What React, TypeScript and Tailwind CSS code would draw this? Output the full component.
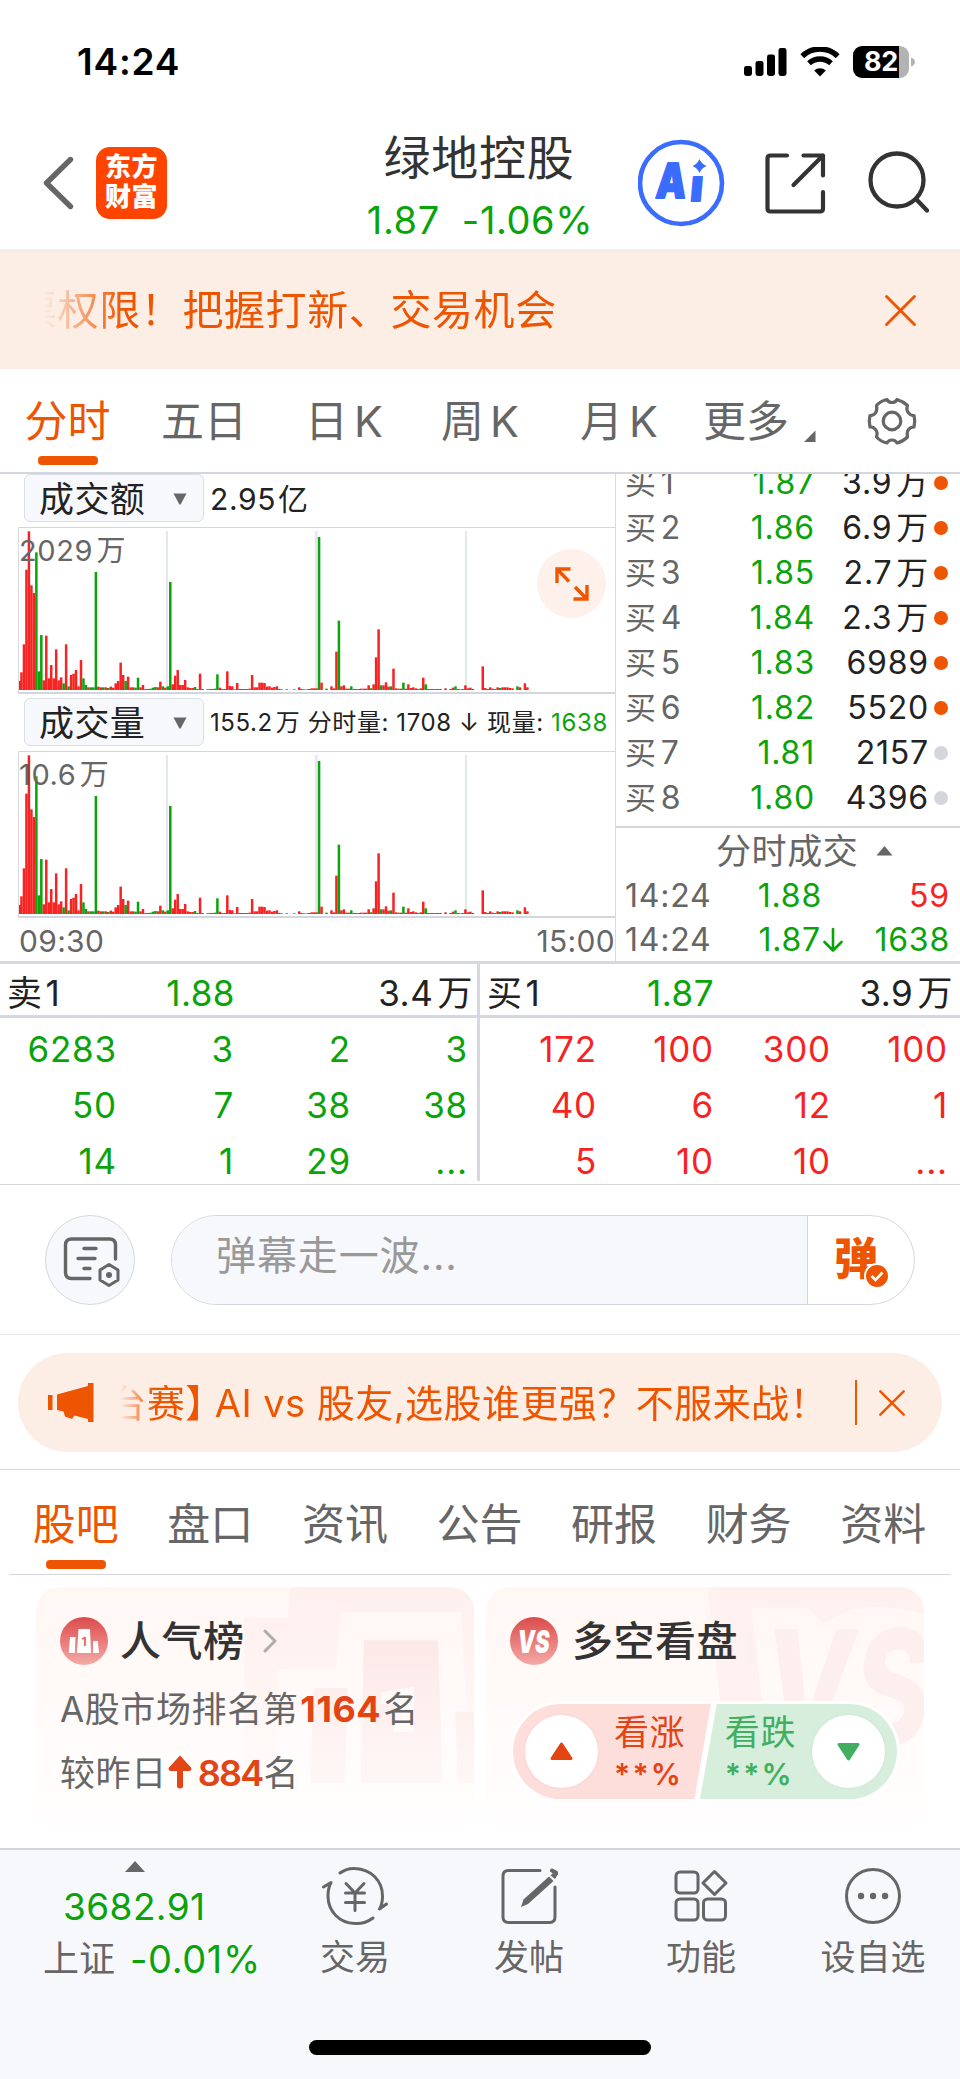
import React from "react";

const RED = "#f72323";
const GREEN = "#0aa30a";

/* One entry per traded minute: [minute, height, isGreen]. */
const BARS: Array<[number, number, number]> = [
  [0, 27, 0], [1, 53, 0], [2, 137, 0], [3, 361, 0], [4, 476, 0], [5, 314, 0], [6, 291, 0], [7, 413, 1],
  [8, 56, 1], [9, 165, 1], [10, 29, 0], [11, 163, 0], [12, 35, 0], [13, 75, 0], [14, 35, 0], [15, 122, 0],
  [16, 29, 0], [17, 38, 0], [18, 20, 1], [19, 137, 0], [20, 11, 1], [21, 45, 0], [22, 49, 0], [23, 60, 0],
  [24, 11, 0], [25, 90, 0], [26, 35, 1], [27, 15, 1], [28, 8, 0], [29, 8, 1], [30, 8, 1], [31, 354, 1],
  [32, 10, 0], [33, 8, 0], [34, 8, 1], [35, 8, 0], [36, 6, 1], [37, 10, 0], [38, 7, 0], [39, 20, 0],
  [40, 27, 0], [41, 82, 0], [42, 45, 0], [43, 27, 1], [44, 40, 0], [45, 8, 0], [46, 8, 0], [47, 7, 1],
  [48, 37, 1], [49, 8, 0], [50, 15, 0], [51, 3, 0], [52, 3, 1], [53, 4, 1], [54, 7, 1], [55, 9, 1],
  [56, 8, 0], [57, 25, 0], [58, 11, 1], [59, 7, 0], [60, 11, 1], [61, 324, 1], [62, 17, 0], [63, 43, 0],
  [64, 60, 0], [65, 15, 0], [66, 15, 0], [67, 30, 0], [68, 8, 0], [69, 6, 0], [70, 6, 0], [71, 9, 1],
  [72, 3, 0], [73, 49, 0], [74, 3, 0], [76, 2, 1], [77, 3, 0], [78, 3, 0], [79, 4, 1], [80, 47, 1],
  [81, 7, 0], [82, 3, 0], [83, 3, 0], [84, 56, 0], [85, 12, 0], [86, 11, 0], [87, 2, 0], [88, 21, 0],
  [89, 3, 0], [90, 3, 0], [91, 3, 0], [92, 3, 0], [93, 4, 0], [94, 45, 0], [95, 8, 0], [96, 8, 0],
  [97, 22, 0], [98, 22, 0], [99, 21, 0], [100, 10, 0], [101, 11, 0], [102, 7, 0], [103, 9, 0], [104, 11, 0],
  [105, 3, 0], [106, 2, 0], [108, 2, 1], [111, 2, 0], [113, 8, 0], [114, 3, 0], [115, 2, 0], [116, 2, 1],
  [117, 3, 0], [118, 5, 0], [119, 5, 0], [120, 5, 0], [121, 459, 1], [122, 22, 0], [124, 4, 1], [126, 11, 0],
  [127, 5, 0], [128, 115, 0], [129, 208, 1], [130, 11, 0], [131, 14, 0], [132, 4, 0], [133, 4, 0], [134, 11, 1],
  [135, 3, 0], [136, 3, 0], [137, 3, 0], [138, 4, 0], [139, 4, 0], [140, 4, 0], [141, 14, 0], [142, 5, 1],
  [143, 17, 0], [144, 98, 0], [145, 182, 0], [146, 14, 1], [147, 14, 0], [148, 23, 0], [149, 10, 0], [150, 11, 1],
  [151, 64, 0], [152, 5, 0], [153, 4, 0], [154, 4, 0], [155, 22, 1], [156, 4, 0], [157, 17, 0], [158, 6, 0],
  [159, 8, 0], [160, 5, 0], [161, 3, 0], [162, 5, 0], [163, 37, 0], [164, 17, 1], [165, 3, 0], [166, 3, 0],
  [167, 3, 0], [168, 3, 0], [169, 3, 0], [170, 3, 0], [172, 5, 0], [174, 3, 0], [175, 7, 0], [176, 11, 1],
  [177, 3, 0], [178, 2, 0], [179, 3, 0], [180, 14, 0], [181, 5, 0], [182, 7, 0], [183, 3, 0], [187, 71, 0],
  [188, 6, 0], [189, 3, 0], [190, 8, 0], [191, 4, 0], [192, 3, 0], [193, 8, 0], [194, 6, 1], [195, 8, 0],
  [196, 8, 0], [197, 8, 0], [198, 6, 0], [199, 5, 0], [201, 11, 1], [202, 8, 0], [204, 20, 0], [205, 8, 0],
];

function VolumeChart() {
  return (
    <svg width="597" height="163" viewBox="0 0 597 163" className="block" shapeRendering="geometricPrecision">
      <g fill="#e3e7ee">
        <rect x="148" y="3" width="2" height="159" />
        <rect x="297" y="3" width="2.6" height="159" />
        <rect x="447" y="3" width="2" height="159" />
      </g>
      {BARS.map(([m, h, g]) => {
        const x = Math.max(1, 1 + m * 2.48 - 1.25);
        return <rect key={m} x={x} y={162 - h / 3} width="2.5" height={h / 3} fill={g ? GREEN : RED} />;
      })}
    </svg>
  );
}

/* A number followed by its ten-thousands unit, set slightly apart. */
function Wan({ children }: { children: string }) {
  return (
    <>
      {children}
      <span className="ml-[0.12em]">万</span>
    </>
  );
}

function ChartPanel({ name, peak, children, height }: { name: string; peak: string; height: string; children: React.ReactNode }) {
  return (
    <div className="ml-[18px]">
      <div className={"flex items-start " + height}>
        <div className="ml-[6px] flex h-[48px] w-[180px] shrink-0 items-center rounded-[6px] border border-[#dcdee6] bg-[#f7f8fb] pl-[14px] pt-[2px] text-[35px] text-[#222]">
          <span className="tracking-[0.4px]">{name}</span>
          <svg width="14" height="12" viewBox="0 0 14 12" className="ml-[28px]">
            <path d="M0.5 0.5H13.5L7.6 11.5H6.4Z" fill="#666" />
          </svg>
        </div>
        <div className="ml-[6px] flex h-[48px] items-center whitespace-nowrap pt-[1px] text-[#222]">{children}</div>
      </div>
      <div className="relative h-[167px] border-b-2 border-l border-t border-b-[#d3d7dd] border-l-[#d8dae0] border-t-[#d3d7dd]">
        <div className="-ml-px">
          <VolumeChart />
        </div>
        <div className="absolute left-0 top-[5px] flex h-[34px] items-center text-[29px] tracking-[0.6px] text-[#666]">
          <Wan>{peak}</Wan>
        </div>
      </div>
    </div>
  );
}

const BIDS: Array<[string, string, string, boolean, boolean]> = [
  ["1", "1.87", "3.9", true, true],
  ["2", "1.86", "6.9", true, true],
  ["3", "1.85", "2.7", true, true],
  ["4", "1.84", "2.3", true, true],
  ["5", "1.83", "6989", false, true],
  ["6", "1.82", "5520", false, true],
  ["7", "1.81", "2157", false, false],
  ["8", "1.80", "4396", false, false],
];

const SELLS = [["6283", "3", "2", "3"], ["50", "7", "38", "38"], ["14", "1", "29", "..."]];
const BUYS = [["172", "100", "300", "100"], ["40", "6", "12", "1"], ["5", "10", "10", "..."]];

function QueueGrid({ rows, className }: { rows: string[][]; className: string }) {
  return (
    <div className={"flex flex-col pt-[3px] " + className}>
      {rows.map((r, i) => (
        <div key={i} className="flex h-[56px] shrink-0 items-center justify-end text-[35px] tracking-[0.8px]">
          {r.map((v, j) => (
            <span key={j} className="w-[117px] shrink-0 text-right">{v}</span>
          ))}
        </div>
      ))}
    </div>
  );
}

function Close({ size, className }: { size: number; className?: string }) {
  return (
    <svg width={size} height={size} viewBox="0 0 30 30" className={className}>
      <path d="M1.5 1.5L28.5 28.5M28.5 1.5L1.5 28.5" stroke="#ee5500" strokeWidth="2.8" strokeLinecap="round" />
    </svg>
  );
}

function StatusBar() {
  return (
    <div className="h-[117px] pt-[31px]">
      <div className="flex h-[61px] items-center">
        <span className="ml-[77px] w-[667px] text-[37px] font-semibold tracking-[0.8px] text-black">14:24</span>
        <svg width="43" height="30" viewBox="0 0 43 30" className="shrink-0">
          <rect x="0" y="19" width="8" height="10" rx="2.4" />
          <rect x="11.5" y="14" width="8" height="15" rx="2.4" />
          <rect x="23" y="7.5" width="8" height="21.5" rx="2.4" />
          <rect x="34.5" y="1" width="8" height="28" rx="2.4" />
        </svg>
        <svg width="40" height="30" viewBox="0 0 40 30" className="ml-[13px] shrink-0" fill="none" stroke="#000">
          <path d="M2.3 9.2A25.5 25.5 0 0 1 37.7 9.2" strokeWidth="5.6" />
          <path d="M9 16.2A16.5 16.5 0 0 1 31 16.2" strokeWidth="5.4" />
          <path d="M20 29.5L14.2 23.6A8.5 8.5 0 0 1 25.8 23.6Z" fill="#000" stroke="none" />
        </svg>
        <div className="ml-[13px] flex h-[32px] w-[56px] shrink-0 items-center justify-center overflow-hidden rounded-[9px] bg-[linear-gradient(90deg,#000_46px,#b3b3b3_46px)] text-[27px] font-bold tracking-[-0.3px] text-white">
          82
        </div>
        <svg width="4" height="10" viewBox="0 0 4 10" className="ml-[2px]">
          <path d="M0 0.5Q4 2 4 5T0 9.5Z" fill="#b3b3b3" />
        </svg>
      </div>
    </div>
  );
}

function Header() {
  return (
    <div className="flex h-[135px] items-start border-b-[3px] border-[#eeeeee]">
      <div className="flex h-[132px] items-center">
        <svg width="36" height="60" viewBox="0 0 36 60" className="ml-[40px]" fill="none">
          <path d="M30.5 6.5L6.5 30L30.5 53.5" stroke="#666" strokeWidth="5.4" strokeLinecap="round" strokeLinejoin="round" />
        </svg>
        <div className="ml-[20px] flex h-[72px] w-[71px] flex-col items-center justify-center rounded-[14px] bg-[#ff4400] pb-[2px] text-[26px] font-black leading-[30px] tracking-[0.5px] text-white">
          <span>东方</span>
          <span>财富</span>
        </div>
      </div>
      <div className="ml-[153px] w-[318px] text-center">
        <div className="flex h-[80px] items-center justify-center text-[47px] tracking-[0.7px] text-[#333]">绿地控股</div>
        <div className="flex h-[46px] items-center justify-center whitespace-pre pl-[2px] text-[38px] tracking-[0.6px] text-[#0aa30a]">
          <span>1.87</span>
          <span className="ml-[22px]">-1.06%</span>
        </div>
      </div>
      <div className="flex h-[132px] items-center">
        <svg width="88" height="88" viewBox="0 0 88 88">
          <circle cx="43" cy="44" r="41" fill="none" stroke="#3a6cff" strokeWidth="4.6" />
          <g fill="#3a6cff" className="font-[Inter,sans-serif] font-black" stroke="#3a6cff" strokeWidth="2" strokeLinejoin="round">
            <text x="0" y="0" fontSize="48" transform="translate(17 59.3) skewX(-5) scale(0.79 1)">A</text>
            <text x="0" y="0" fontSize="44" transform="translate(51.5 61.5) skewX(-5) scale(0.95 1)">ı</text>
          </g>
          <path d="M61.5 20Q63.5 25 68.5 27Q63.5 29 61.5 34Q59.5 29 54.5 27Q59.5 25 61.5 20Z" fill="#3a6cff" />
        </svg>
        <svg width="64" height="64" viewBox="0 0 64 64" className="ml-[37px]" fill="none" stroke="#333" strokeWidth="4.2" strokeLinecap="round" strokeLinejoin="round">
          <path d="M24 4.5H7.5Q4.5 4.5 4.5 7.5V57.5Q4.5 60.5 7.5 60.5H57Q60 60.5 60 57.5V41" />
          <path d="M40.5 4.5H60V24.5M60 4.5L30.5 34" />
        </svg>
        <svg width="64" height="64" viewBox="0 0 64 64" className="ml-[38px]" fill="none" stroke="#333" strokeWidth="4.3" strokeLinecap="round">
          <circle cx="32" cy="29" r="26.5" />
          <path d="M51.5 48.5L62 59.5" />
        </svg>
      </div>
    </div>
  );
}

function PeriodTabs() {
  const tab = "flex h-[104px] items-center justify-center whitespace-nowrap text-[#666]";
  return (
    <div className="flex h-[105px] border-b-2 border-[#d3d7dd] text-[43px]">
      <div className="ml-[14px] flex w-[108px] flex-col items-center">
        <span className="flex h-[87px] shrink-0 items-center pr-[1px] pt-[17px] text-[#ee5500]">分时</span>
        <span className="h-[9px] w-[60px] rounded-[4px] bg-[#ee5500]" />
      </div>
      <div className={tab + " ml-[28px] w-[108px]"}>五日</div>
      <div className={tab + " ml-[32px] w-[108px]"}>日<span className="ml-[6px]">K</span></div>
      <div className={tab + " ml-[28px] w-[108px]"}>周<span className="ml-[6px]">K</span></div>
      <div className={tab + " ml-[31px] w-[108px]"}>月<span className="ml-[6px]">K</span></div>
      <div className={tab + " ml-[19px] w-[108px]"}>更多</div>
      <div className="flex h-[104px] items-center">
        <svg width="12" height="12" viewBox="0 0 12 12" className="ml-[4px] mt-[30px]">
          <path d="M11.5 0.5V12H0Z" fill="#666" />
        </svg>
        <svg width="52" height="52" viewBox="0 0 52 52" className="ml-[50px]" fill="none" stroke="#666" strokeWidth="3.2" strokeLinejoin="round">
          <path d="M21 4.5Q22.5 7.5 26 7.5T31 4.5Q37.5 6.5 41.5 10.5Q40 15 42.5 18T48 20.5Q49.5 26 48 32Q44.5 32 42.5 34.5T41.5 42Q37 46.5 31 48Q29.5 45 26 45T21 48Q14.5 46.5 10.5 42Q12 37.5 9.5 34.5T4 32Q2.5 26 4 20.5Q7.5 20.5 9.5 18T10.5 10.5Q14.5 6 21 4.5Z" />
          <circle cx="26" cy="26" r="8.8" />
        </svg>
      </div>
    </div>
  );
}

function OrderBook() {
  return (
    <div className="flex w-[344px] flex-col overflow-hidden">
      <div className="h-[352px] overflow-hidden">
        <div className="-mt-[14px]">
          {BIDS.map(([n, price, vol, wan, on]) => (
            <div key={n} className="flex h-[45px] items-center text-[32px] tracking-[0.8px]">
              <span className="ml-[9px] w-[70px] text-[#666]"><span className="text-[31px]">买</span><span className="ml-[4px]">{n}</span></span>
              <span className="w-[120px] text-right text-[#0aa30a]">{price}</span>
              <span className="w-[114px] whitespace-nowrap text-right text-[#222]">{wan ? <Wan>{vol}</Wan> : vol}</span>
              <span className={"ml-[5px] h-[14px] w-[14px] rounded-full " + (on ? "bg-[#ee5500]" : "bg-[#d3d7dd]")} />
            </div>
          ))}
        </div>
      </div>
      <div className="border-t-2 border-[#d3d7dd]">
        <div className="flex h-[46px] items-center pl-[100px] text-[35px] tracking-[0.6px] text-[#666]">
          分时成交
          <svg width="17" height="10" viewBox="0 0 17 10" className="ml-[18px] shrink-0"><path d="M8.5 0L16.5 9.5H0.5Z" fill="#666" /></svg>
        </div>
        <div className="flex h-[44px] items-center text-[32px] tracking-[0.8px]">
          <span className="ml-[9px] w-[100px] text-[#666]">14:24</span>
          <span className="w-[97px] text-right text-[#0aa30a]">1.88</span>
          <span className="w-[128px] text-right text-[#f72323]">59</span>
        </div>
        <div className="flex h-[43px] items-center text-[32px] tracking-[0.8px]">
          <span className="ml-[9px] w-[100px] text-[#666]">14:24</span>
          <span className="w-[96px] text-right text-[#0aa30a]">1.87</span>
          <svg width="20" height="26" viewBox="0 0 20 26" className="ml-[2px]" fill="none" stroke="#0aa30a" strokeWidth="2.6" strokeLinecap="round" strokeLinejoin="round">
            <path d="M10 2V23.5M1.5 15L10 23.5L18.5 15" />
          </svg>
          <span className="w-[107px] text-right text-[#0aa30a]">1638</span>
        </div>
      </div>
    </div>
  );
}

function Market() {
  return (
    <div className="flex h-[487px]">
      <div className="w-[615px]">
        <ChartPanel name="成交额" peak="2029" height="h-[53px]">
          <span className="text-[30px] tracking-[0.6px]">2.95<span className="ml-[2px]">亿</span></span>
        </ChartPanel>
        <ChartPanel name="成交量" peak="10.6" height="h-[57px] pt-[4px]">
          <span className="text-[24px] tracking-[0.6px]"><Wan>155.2</Wan> 分时量: 1708 ↓ 现量: <span className="text-[#0aa30a]">1638</span></span>
        </ChartPanel>
        <div className="ml-[19px] flex h-[45px] items-center justify-between text-[30px] tracking-[0.3px] text-[#666]">
          <span>09:30</span>
          <span>15:00</span>
        </div>
      </div>
      <div className="border-l border-[#d8dae0]"><OrderBook /></div>
    </div>
  );
}

function Queue() {
  const head = "flex h-[51px] items-center pt-[7px] text-[35px] tracking-[0.5px] text-[#222]";
  return (
    <div className="flex h-[224px] border-b border-[#d3d7dd]">
      <div className="flex w-[960px] flex-col border-t-[3px] border-[#d5d8de]">
        <div className="flex h-[54px] border-b-[3px] border-[#d5d8de]">
          <div className={head + " w-[480px] border-r-[3px] border-[#d5d8de]"}>
            <span className="ml-[7px] w-[100px]">卖<span className="ml-[3px]">1</span></span>
            <span className="w-[128px] text-right text-[#0aa30a]">1.88</span>
            <span className="w-[238px] text-right"><Wan>3.4</Wan></span>
          </div>
          <div className={head + " w-[480px]"}>
            <span className="ml-[7px] w-[100px]">买<span className="ml-[3px]">1</span></span>
            <span className="w-[127px] text-right text-[#0aa30a]">1.87</span>
            <span className="w-[239px] text-right"><Wan>3.9</Wan></span>
          </div>
        </div>
        <div className="flex h-[166px] overflow-hidden">
          <QueueGrid rows={SELLS} className="h-[163px] w-[480px] border-r-[3px] border-[#d5d8de] pr-[9px] text-[#0aa30a]" />
          <QueueGrid rows={BUYS} className="w-[480px] pr-[12px] text-[#f72323]" />
        </div>
      </div>
    </div>
  );
}

function DanmuBar() {
  return (
    <div className="flex h-[150px] items-start border-b border-[#e8e9ec] pt-[30px]">
      <div className="ml-[45px] flex h-[90px] w-[90px] items-center justify-center rounded-full border-[1.5px] border-[#d3d7dd] bg-[#f7f8fb]">
        <svg width="60" height="56" viewBox="0 0 60 56" fill="none" stroke="#666" strokeWidth="3.4" strokeLinecap="round" strokeLinejoin="round">
          <path d="M30 46.5H11.5Q5.5 46.5 5.5 40.5V13Q5.5 7 11.5 7H49.5Q55.5 7 55.5 13V27" />
          <path d="M24 16.5H36M18 26.5H35M24 36.5H30" />
          <path d="M49 32.5L58 38V48L49 53.5L40 48V38Z" strokeWidth="3" />
          <circle cx="49" cy="43" r="3" fill="#666" stroke="none" />
        </svg>
      </div>
      <div className="ml-[36px] flex h-[90px] w-[744px] overflow-hidden rounded-full border-[1.5px] border-[#d3d7dd]">
        <div className="flex w-[636px] items-center border-r border-[#d3d7dd] bg-[#f7f8fb] pb-[8px] pl-[44px] text-[40px] tracking-[0.9px] text-[#999]">弹幕走一波...</div>
        <div className="flex flex-1 items-center pl-[26px]">
          <div className="relative flex h-[50px] w-[46px] items-center pb-[2px] text-[44px] font-black text-[#ee5500]">
            <span>弹</span>
            <svg width="26" height="26" viewBox="0 0 26 26" className="absolute -bottom-[4px] left-[30px]">
              <circle cx="13" cy="13" r="12" fill="#ee5500" stroke="#fff" strokeWidth="2" />
              <path d="M7.5 13L11.5 17L18.5 9.5" fill="none" stroke="#fff" strokeWidth="2.6" />
            </svg>
          </div>
        </div>
      </div>
    </div>
  );
}

function Promo() {
  return (
    <div className="h-[135px] border-b border-[#d8dae0] px-[18px] pt-[18px]">
      <div className="flex h-[99px] items-center rounded-full bg-[#fdeee5]">
        <svg width="46" height="42" viewBox="0 0 46 42" className="ml-[30px] shrink-0" fill="#ee5500">
          <rect x="0" y="13" width="4.5" height="15" />
          <path d="M9 12.5L40 4V1H45.5V40H40V37L26.5 33.5L24 37L17 34.5L15.5 29.5L9 28Z" />
        </svg>
        <div className="ml-[26px] flex h-[60px] w-[708px] shrink-0 justify-end overflow-hidden [mask-image:linear-gradient(90deg,transparent,#000_34px)]">
          <span className="flex items-center whitespace-pre text-[38px] tracking-[0.45px] text-[#ee5500]">台赛<span className="-mr-[20px]">】</span> AI vs 股友,选股谁更强？不服来战！</span>
        </div>
        <span className="ml-[27px] h-[45px] w-[2px] bg-[#ee5500]" />
        <Close size={26} className="ml-[22px]" />
      </div>
    </div>
  );
}

const SECTIONS = ["股吧", "盘口", "资讯", "公告", "研报", "财务", "资料"];

function SectionTabs() {
  return (
    <div className="mx-[9px] grid h-[105px] grid-cols-7 border-b border-[#d3d7dd] text-[43px]">
      {SECTIONS.map((s, i) => (
        <div key={s} className="flex flex-col items-center">
          <span className={"flex h-[90px] shrink-0 items-center pr-[1px] pt-[18px] " + (i === 0 ? "text-[#ee5500]" : "text-[#666]")}>{s}</span>
          {i === 0 && <span className="h-[9px] w-[60px] rounded-[4px] bg-[#ee5500]" />}
        </div>
      ))}
    </div>
  );
}

function RankCard() {
  return (
    <div className="relative h-[242px] w-[438px] overflow-hidden rounded-[24px] bg-gradient-to-b from-[#fff7f4] to-[#fffefe]">
      <svg width="438" height="242" viewBox="108 381 1314 726" className="absolute inset-0">
        <defs>
          <linearGradient id="fadeA" x1="0" y1="381" x2="0" y2="980" gradientUnits="userSpaceOnUse">
            <stop offset="0" stopColor="#fef0ee" />
            <stop offset="1" stopColor="#fef0ee" stopOpacity="0" />
          </linearGradient>
          <linearGradient id="fadeB" x1="0" y1="541" x2="0" y2="1000" gradientUnits="userSpaceOnUse">
            <stop offset="0" stopColor="#fce8e7" />
            <stop offset="1" stopColor="#fdf3f2" stopOpacity="0.5" />
          </linearGradient>
        </defs>
        <path d="M872 381H1422V755H1400L1383 455H1022L1008 627H835L820 970H733V475H863Z" fill="url(#fadeA)" />
        <path d="M1092 541H1314L1328 970H1082ZM1142 698V733H1182V815H1241V680ZM942 684H1043L1035 970H930ZM1366 755H1422V970H1373Z" fill="url(#fadeB)" fillRule="evenodd" />
      </svg>
      <div className="relative pl-[24px]">
        <div className="flex h-[84px] items-end">
          <div className="flex h-[60px] items-center">
            <svg width="48" height="48" viewBox="0 0 48 48">
              <defs>
                <linearGradient id="badge" x1="0" y1="0" x2="0" y2="1">
                  <stop offset="0" stopColor="#dc4b4b" />
                  <stop offset="1" stopColor="#f4aaa8" />
                </linearGradient>
              </defs>
              <circle cx="24" cy="24" r="24" fill="url(#badge)" />
              <path d="M18.5 12H30L31 36H17ZM10 20H15.5L14.8 36H8.8ZM33 24H37.8L39 36H33Z" fill="#fff" />
              <text x="24" y="28.5" textAnchor="middle" fontSize="12" fontWeight="700" fill="#df6361">1</text>
            </svg>
            <span className="ml-[12px] pt-[1px] text-[41px] font-medium tracking-[0.6px] text-[#333]">人气榜</span>
            <svg width="14" height="24" viewBox="0 0 14 24" className="ml-[18px]" fill="none">
              <path d="M2 2L12 12L2 22" stroke="#b0acab" strokeWidth="3" strokeLinecap="round" strokeLinejoin="round" />
            </svg>
          </div>
        </div>
        <div className="flex h-[76px] items-center text-[35px] tracking-[0.6px] text-[#666]">
          A股市场排名第<span className="ml-[2px] text-[36px] font-bold tracking-[0.5px] text-[#e24414]">1164</span><span className="ml-[2px]">名</span>
        </div>
        <div className="flex h-[52px] items-center text-[35px] tracking-[0.6px] text-[#666]">
          较昨日
          <svg width="24" height="34" viewBox="0 0 24 34" className="mb-[2px] ml-[1px]">
            <path d="M12 0.5L23 12.5Q24.5 16 21 16H15V31Q15 33.5 12 33.5T9 31V16H3Q-0.5 16 1 12.5Z" fill="#e24414" />
          </svg>
          <span className="ml-[6px] text-[36px] font-semibold tracking-[-1.8px] text-[#e24414]">884</span>
          <span className="ml-[1px]">名</span>
        </div>
      </div>
    </div>
  );
}

function VersusCard() {
  return (
    <div className="relative h-[242px] w-[438px] overflow-hidden rounded-[24px] bg-gradient-to-b from-[#fff7f4] to-[#fffefe]">
      <svg width="438" height="242" viewBox="18 381 1314 726" className="absolute inset-0">
        <path d="M682 381H1332V460Q1180 425 1100 455L1030 490L985 445H815L850 760H725Z" fill="#fef1ef" />
        <text x="0" y="0" fontSize="475" fontWeight="800" fill="#fdefed" transform="translate(850 852)" textLength="500" lengthAdjust="spacingAndGlyphs" className="font-[Inter,sans-serif] italic">VS</text>
      </svg>
      <div className="relative">
        <div className="flex h-[84px] items-end pl-[24px]">
          <div className="flex h-[60px] items-center">
            <svg width="48" height="48" viewBox="0 0 48 48">
              <circle cx="24" cy="24" r="24" fill="url(#badge)" />
              <text x="23.5" y="35.5" textAnchor="middle" fontSize="32" fontWeight="900" fill="#fff" textLength="32" lengthAdjust="spacingAndGlyphs" className="font-[Inter,sans-serif] italic">VS</text>
            </svg>
            <span className="ml-[14px] pt-[1px] text-[41px] font-medium tracking-[0.5px] text-[#333]">多空看盘</span>
          </div>
        </div>
        <div className="ml-[24px] mt-[30px] flex h-[101px] w-[390px] items-center rounded-full bg-white px-[3px]">
          <div className="flex h-[95px] w-[198px] items-center rounded-l-full bg-[#fddedb] pl-[12px] [clip-path:polygon(0_0,100%_0,91.6%_100%,0_100%)]">
            <div className="flex h-[73px] w-[73px] shrink-0 items-center justify-center rounded-full bg-white shadow-[0_0_3px_#f9cfca]">
              <svg width="23" height="19" viewBox="0 0 23 19"><path d="M11.5 2L21 16.5H2Z" fill="#e24414" stroke="#e24414" strokeWidth="3" strokeLinejoin="round" /></svg>
            </div>
            <div className="ml-[16px] pt-[2px] text-[#e24414]">
              <div className="flex h-[42px] items-center whitespace-nowrap text-[35px] tracking-[0.6px]">看涨</div>
              <div className="flex h-[40px] items-center text-[30px] font-semibold tracking-[2.2px]">**%</div>
            </div>
          </div>
          <div className="-ml-[11px] flex h-[95px] w-[197px] items-center justify-end rounded-r-full bg-[#d7eedd] pr-[12px] [clip-path:polygon(8.5%_0,100%_0,100%_100%,0_100%)]">
            <div className="mr-[16px] pt-[2px] text-[#40b060]">
              <div className="flex h-[42px] items-center whitespace-nowrap text-[35px] tracking-[0.6px]">看跌</div>
              <div className="flex h-[40px] w-[71px] items-center whitespace-nowrap text-[30px] font-semibold tracking-[2.2px]">**%</div>
            </div>
            <div className="flex h-[73px] w-[73px] shrink-0 items-center justify-center rounded-full bg-white shadow-[0_0_3px_#c5e5cd]">
              <svg width="23" height="19" viewBox="0 0 23 19"><path d="M11.5 17L21 2.5H2Z" fill="#40b060" stroke="#40b060" strokeWidth="3" strokeLinejoin="round" /></svg>
            </div>
          </div>
        </div>
      </div>
    </div>
  );
}

function FootItem({ label, width, children }: { label: string; width: string; children: React.ReactNode }) {
  return (
    <div className={"flex flex-col items-center " + width}>
      <div className="flex h-[92px] items-center">{children}</div>
      <div className="flex h-[30px] items-center whitespace-nowrap text-[35px]">{label}</div>
    </div>
  );
}

function Footer() {
  return (
    <div className="flex h-[231px] flex-col border-t-2 border-[#d3d5dd] bg-[#f7f8fb] text-[#666]">
      <div className="flex">
        <div className="w-[268px]">
          <div className="flex h-[30px] items-end pb-[8px] pl-[125px]">
            <svg width="20" height="11" viewBox="0 0 20 11"><path d="M10 0L20 11H0Z" fill="#666" /></svg>
          </div>
          <div className="flex h-[53px] items-center pl-[63px] text-[37px] tracking-[0.4px] text-[#0aa30a]">3682.91</div>
          <div className="flex h-[52px] items-center pl-[43px] text-[36px]">
            上证<span className="ml-[15px] text-[38px] tracking-[0.6px] text-[#0aa30a]">-0.01%</span>
          </div>
        </div>
        <FootItem label="交易" width="w-[174px]">
          <svg width="66" height="60" viewBox="0 0 66 60" fill="none" stroke="#666" strokeWidth="3" strokeLinecap="round" strokeLinejoin="round">
            <path d="M18 7Q25 2 33 2.5C49 3 60.5 15 60.5 30Q60.5 38 57.5 43L64.5 38" />
            <path d="M51 52Q43 58 33 57.5C17 57 6 45 6 30Q6 22 9 16.5L1.5 21" />
            <path d="M24 17.5L33 27L42 17.5M33 27V44.5M23.5 27H42.5M23.5 36.5H42.5" />
          </svg>
        </FootItem>
        <FootItem label="发帖" width="w-[174px]">
          <svg width="58" height="58" viewBox="0 0 58 58" fill="none" stroke="#666" strokeWidth="3" strokeLinecap="round" strokeLinejoin="round">
            <path d="M40 3.5H8.5Q3 3.5 3 9V50Q3 55.5 8.5 55.5H49.5Q55 55.5 55 50V20" />
            <path d="M55.5 3.5L58 7L55 12L50.5 8.5Z" fill="#666" stroke="none" />
            <path d="M49 9.5L53.5 14L28 37L21 40L23.5 32.5Z" fill="#666" stroke="none" />
            <path d="M52 3.5L56.5 6" strokeWidth="4" />
          </svg>
        </FootItem>
        <FootItem label="功能" width="w-[170px]">
          <svg width="54" height="54" viewBox="0 0 54 54" fill="none" stroke="#666" strokeWidth="3" strokeLinejoin="round">
            <rect x="2" y="3" width="22" height="21" rx="4" />
            <rect x="2" y="30" width="22" height="21" rx="4" />
            <rect x="29.5" y="30" width="22" height="21" rx="4" />
            <path d="M40.5 2.5L52 14L40.5 25.5L29 14Z" />
          </svg>
        </FootItem>
        <FootItem label="设自选" width="w-[174px]">
          <svg width="58" height="58" viewBox="0 0 58 58" fill="none" stroke="#666" strokeWidth="3">
            <circle cx="29" cy="29" r="26.5" />
            <g fill="#666" stroke="none">
              <circle cx="17" cy="29" r="3.2" />
              <circle cx="29" cy="29" r="3.2" />
              <circle cx="41" cy="29" r="3.2" />
            </g>
          </svg>
        </FootItem>
      </div>
      <div className="mt-[55px] h-[15px] w-[342px] self-center rounded-full bg-black" />
    </div>
  );
}

export default function App() {
  return (
    <div className="flex h-[2079px] w-[960px] flex-col overflow-hidden bg-white font-[Inter,'Noto_Sans_CJK_SC',sans-serif] leading-none">
      <StatusBar />
      <Header />
      <div className="flex h-[117px] items-center justify-between bg-[#fdeee5] pl-[43px] pr-[44px]">
        <div className="flex h-[60px] w-[600px] overflow-hidden [mask-image:linear-gradient(90deg,transparent,#000_80px)]">
          <span className="-ml-[27px] flex items-center whitespace-nowrap text-[41px] tracking-[0.6px] text-[#ee5500]">票权限！把握打新、交易机会</span>
        </div>
        <Close size={31} />
      </div>
      <PeriodTabs />
      <div className="relative">
        <Market />
        <div className="absolute left-[537px] top-[75px] flex h-[69px] w-[69px] items-center justify-center rounded-full bg-[#fef1eb]">
          <svg width="34" height="34" viewBox="0 0 34 34" fill="none" stroke="#ee5500" strokeWidth="3.4">
            <path d="M2 16V2H15.5M2 2L14 14.5" />
            <path d="M32 18V32H18.5M32 32L20 20" />
          </svg>
        </div>
      </div>
      <Queue />
      <DanmuBar />
      <Promo />
      <SectionTabs />
      <div className="flex h-[273px] gap-[12px] px-[36px] pt-[12px]">
        <RankCard />
        <VersusCard />
      </div>
      <Footer />
    </div>
  );
}
